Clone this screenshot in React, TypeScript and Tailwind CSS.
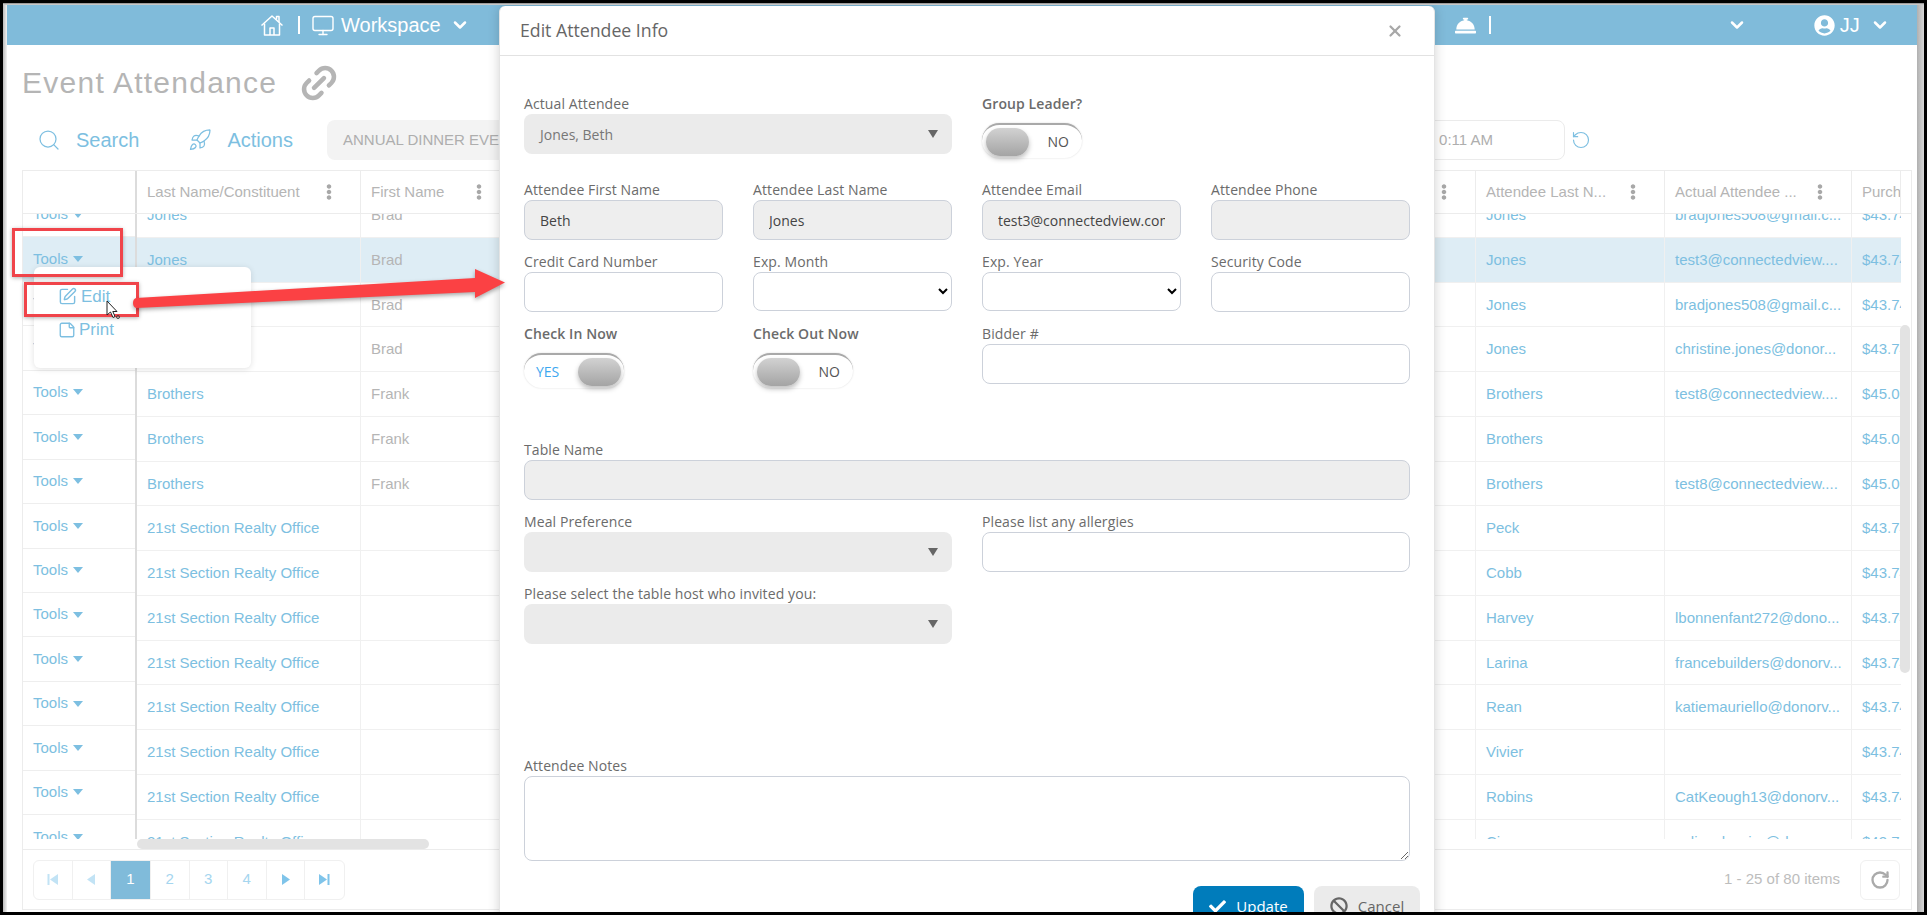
import { ChevronDown, Link2, Monitor, Rocket, RotateCcw, RotateCw, Search, SquarePen, StickyNote, X } from 'lucide-react'
import { FaBan, FaCheck, FaConciergeBell, FaEllipsisV, FaUserCircle } from 'react-icons/fa'

const rows = [
  { last: 'Jones', first: 'Brad', attendee: 'Jones', email: 'bradjones508@gmail.c...', price: '$43.74' },
  { last: 'Jones', first: 'Brad', attendee: 'Jones', email: 'test3@connectedview....', price: '$43.74', selected: true },
  { last: 'Jones', first: 'Brad', attendee: 'Jones', email: 'bradjones508@gmail.c...', price: '$43.74' },
  { last: 'Jones', first: 'Brad', attendee: 'Jones', email: 'christine.jones@donor...', price: '$43.74' },
  { last: 'Brothers', first: 'Frank', attendee: 'Brothers', email: 'test8@connectedview....', price: '$45.00' },
  { last: 'Brothers', first: 'Frank', attendee: 'Brothers', email: '', price: '$45.00' },
  { last: 'Brothers', first: 'Frank', attendee: 'Brothers', email: 'test8@connectedview....', price: '$45.00' },
  { last: '21st Section Realty Office', first: '', attendee: 'Peck', email: '', price: '$43.74' },
  { last: '21st Section Realty Office', first: '', attendee: 'Cobb', email: '', price: '$43.74' },
  { last: '21st Section Realty Office', first: '', attendee: 'Harvey', email: 'lbonnenfant272@dono...', price: '$43.74' },
  { last: '21st Section Realty Office', first: '', attendee: 'Larina', email: 'francebuilders@donorv...', price: '$43.74' },
  { last: '21st Section Realty Office', first: '', attendee: 'Rean', email: 'katiemauriello@donorv...', price: '$43.74' },
  { last: '21st Section Realty Office', first: '', attendee: 'Vivier', email: '', price: '$43.74' },
  { last: '21st Section Realty Office', first: '', attendee: 'Robins', email: 'CatKeough13@donorv...', price: '$43.74' },
  { last: '21st Section Realty Office', first: '', attendee: 'Cisneros', email: 'celinecharrier@donorv...', price: '$43.74' },
]

const columns = 'grid grid-cols-[224px_150px_815px_150px_189px_187px_49px]'
const cell = 'flex items-center overflow-hidden whitespace-nowrap border-r border-[#f0f0f0] pl-[10px] pt-px'

function HeaderCell({ title, menu = true }: { title?: string; menu?: boolean }) {
  return (
    <div className="flex items-center justify-between overflow-hidden whitespace-nowrap border-r border-[#ececec] pl-[10px] pr-[23px]">
      <span>{title}</span>
      {menu && <FaEllipsisV className="h-[16px] w-[16px] shrink-0 text-[#a8a8a8]" />}
    </div>
  )
}

function Label({ children, strong }: { children: string; strong?: boolean }) {
  return <div className={`flex h-[21px] items-center text-[14px] tracking-[0.1px] text-[#6b6b6b] ${strong ? 'font-semibold' : ''}`}>{children}</div>
}

function TextField({ label, value = '', disabled, className = '' }: { label: string; value?: string; disabled?: boolean; className?: string }) {
  return (
    <div className={className}>
      <Label>{label}</Label>
      <input
        readOnly
        value={value}
        className={`block h-[40px] w-full rounded-[8px] border border-[#ccd1da] px-[15px] text-[14px] text-[#444] outline-none ${disabled ? 'bg-[#eeeeee]' : 'bg-white'}`}
      />
    </div>
  )
}

function GreySelect({ label, value }: { label: string; value?: string }) {
  return (
    <div className="col-span-2">
      <Label>{label}</Label>
      <div className="flex h-[40px] items-center justify-between rounded-[8px] bg-[#ebebeb] pl-[16px] pr-[14px] text-[14px] text-[#777]">
        <span>{value}</span>
        <svg width="10" height="8" viewBox="0 0 10 8" className="fill-[#666]">
          <path d="M0 0h10L5 8z" />
        </svg>
      </div>
    </div>
  )
}

function NativeSelect({ label }: { label: string }) {
  return (
    <div>
      <Label>{label}</Label>
      <select className="block h-[39px] w-full rounded-[8px] border border-[#ccd1da] bg-white text-[14px] outline-none" />
    </div>
  )
}

function Toggle({ on }: { on?: boolean }) {
  return (
    <div className={`mt-[9px] flex h-[35px] w-[100px] items-center justify-between rounded-full border-t-2 border-[#a9a9a9] bg-white text-[14px] shadow-[0_0_2px_rgba(0,0,0,0.15)] ${on ? 'pl-[12px] pr-[3px]' : 'pl-[4px] pr-[13px]'}`}>
      {on && <span className="text-[#3ea8f0]">YES</span>}
      <span className="h-[28px] w-[43px] rounded-full bg-gradient-to-b from-[#d2d2d2] to-[#a4a4a4] shadow-[0_3px_5px_rgba(0,0,0,0.25)]" />
      {!on && <span className="text-[#555]">NO</span>}
    </div>
  )
}

function PageButton({ children, active, tone = 'text-[#a5d6ef]' }: { children: React.ReactNode; active?: boolean; tone?: string }) {
  return (
    <div className={`flex h-full items-center justify-center border-r border-[#f0f0f0] text-[15px] last:border-r-0 ${active ? 'w-[40px] bg-[#80bbda] text-white' : `w-[38.5px] ${tone}`}`}>
      {children}
    </div>
  )
}

function Triangle({ dir, bar }: { dir: 'left' | 'right'; bar?: boolean }) {
  return (
    <svg width="11" height="11" viewBox="0 0 11 11" className={dir === 'left' ? '-scale-x-100 fill-current' : 'fill-current'}>
      <path d={bar ? 'M0 0l8 5.5L0 11z' : 'M2 0l8 5.5L2 11z'} />
      {bar && <rect x="8.5" width="2" height="11" />}
    </svg>
  )
}

function HomeIcon() {
  return (
    <svg width="24" height="24" viewBox="0 0 24 24" fill="none" stroke="currentColor" strokeWidth="1.5" strokeLinejoin="round">
      <path d="M1.5 12.5L12 3l10.5 9.5" />
      <path d="M4.5 10.5V22h15V10.5" />
      <path d="M10 22v-7h4v7" />
      <path d="M16.5 6.5V3.5h2.5v5.5" />
    </svg>
  )
}

export default function App() {
  return (
    <div className="relative h-[915px] w-[1927px] overflow-hidden bg-black p-[3px] font-['Liberation_Sans',Arial,sans-serif]">
      <div className="flex h-full flex-col bg-white">
        <div className="h-[2px] shrink-0 bg-gradient-to-b from-[#888] to-[#ddd]" />
        <div className="flex min-h-0 flex-1">
          <div className="w-[4px] shrink-0 bg-gradient-to-r from-[#bbb] to-[#f2f2f2]" />

          <div className="relative w-[1910px] shrink-0 overflow-hidden bg-white">
            {/* top bar */}
            <div className="flex h-[40px] items-center bg-[#80bbda] pl-[253px] text-[20px] text-white">
              <HomeIcon />
              <span className="ml-[14px] h-[18px] w-[2px] bg-white" />
              <Monitor className="ml-[11px] h-[25px] w-[24px]" strokeWidth={1.4} />
              <span className="ml-[6px]">Workspace</span>
              <ChevronDown className="ml-[9px] h-[20px] w-[20px]" strokeWidth={3} />
              <FaConciergeBell className="ml-[985px] h-[21px] w-[21px]" />
              <span className="ml-[13px] h-[18px] w-[2px] bg-white" />
              <ChevronDown className="ml-[236px] h-[20px] w-[20px]" strokeWidth={3} />
              <FaUserCircle className="ml-[67px] h-[21px] w-[21px]" />
              <span className="ml-[5px]">JJ</span>
              <ChevronDown className="ml-[10px] h-[20px] w-[20px]" strokeWidth={3} />
            </div>

            {/* title */}
            <div className="flex h-[75px] items-center pl-[15px] text-[#b5b5b5]">
              <h1 className="text-[30px] tracking-[1.25px]">Event Attendance</h1>
              <Link2 className="ml-[21px] h-[42px] w-[42px] -rotate-45" strokeWidth={2.6} />
            </div>

            {/* toolbar */}
            <div className="flex h-[40px] items-center pl-[30px] text-[20px] text-[#7dbfe1]">
              <Search className="h-[24px] w-[24px]" strokeWidth={1.25} />
              <span className="ml-[15px]">Search</span>
              <Rocket className="ml-[49px] h-[24px] w-[24px]" strokeWidth={1.25} />
              <span className="ml-[15px]">Actions</span>
              <div className="ml-[34px] flex h-full w-[400px] items-center overflow-hidden rounded-[8px] bg-[#f3f3f3] pl-[16px] text-[15px] whitespace-nowrap text-[#aeaeae]">
                ANNUAL DINNER EVENT
              </div>
              <div className="ml-[438px] flex h-full w-[400px] items-center justify-end rounded-[8px] border border-[#ebebeb] pr-[71px] text-[15px] text-[#aeaeae]">
                0:11 AM
              </div>
              <RotateCcw className="ml-[6px] h-[20px] w-[20px]" strokeWidth={1.4} />
            </div>

            {/* grid */}
            <div className="relative mt-[10px] ml-[15px] h-[740px] w-[1890px] border border-[#ececec]">
              <div className="flex h-[43px] border-b border-[#ececec] text-[15px] text-[#b5b5b5]">
                <div className="w-[114px] shrink-0 border-r-2 border-[#dcdcdc]" />
                <div className={`${columns} flex-1`}>
                  <HeaderCell title="Last Name/Constituent" />
                  <HeaderCell title="First Name" />
                  <HeaderCell />
                  <HeaderCell />
                  <HeaderCell title="Attendee Last N..." />
                  <HeaderCell title="Actual Attendee ..." />
                  <HeaderCell title="Purchase" menu={false} />
                </div>
              </div>

              <div className="flex h-[625px] overflow-hidden text-[15px]">
                <div className="mt-[-21px] w-[114px] shrink-0 border-r-2 border-[#dcdcdc]">
                  {rows.map((row, i) => (
                    <div key={i} className={`flex h-[44.44px] items-center gap-[5px] border-b border-[#eeeeee] pl-[10px] text-[#7dbfe1] ${row.selected ? 'bg-[#deedf5]' : ''}`}>
                      Tools
                      <svg width="10" height="6" viewBox="0 0 10 6" className="fill-current">
                        <path d="M0 0h10L5 6z" />
                      </svg>
                    </div>
                  ))}
                </div>
                <div className="mt-[-21px] w-[1764px] shrink-0">
                  {rows.map((row, i) => (
                    <div key={i} className={`${columns} h-[44.75px] border-b border-[#f0f0f0] ${row.selected ? 'bg-[#deedf5]' : ''}`}>
                      <div className={`${cell} text-[#7dbfe1]`}>{row.last}</div>
                      <div className={`${cell} text-[#b5b5b5]`}>{row.first}</div>
                      <div className={cell} />
                      <div className={cell} />
                      <div className={`${cell} text-[#7dbfe1]`}>{row.attendee}</div>
                      <div className={`${cell} text-[#7dbfe1]`}>{row.email}</div>
                      <div className={`${cell} border-r-0 text-[#7dbfe1]`}>{row.price}</div>
                    </div>
                  ))}
                </div>
              </div>

              <div className="h-[10px] pl-[114px]">
                <div className="h-full w-[292px] rounded-full bg-[#e3e3e3]" />
              </div>

              <div className="flex h-[60px] items-center justify-between border-t border-[#ececec] pr-[11px] pl-[10px]">
                <div className="flex h-[40px] overflow-hidden rounded-[6px] border border-[#f0f0f0]">
                  <PageButton tone="text-[#c2e3f5]"><Triangle dir="left" bar /></PageButton>
                  <PageButton tone="text-[#c2e3f5]"><Triangle dir="left" /></PageButton>
                  <PageButton active>1</PageButton>
                  <PageButton>2</PageButton>
                  <PageButton>3</PageButton>
                  <PageButton>4</PageButton>
                  <PageButton tone="text-[#7fc4ea]"><Triangle dir="right" /></PageButton>
                  <PageButton tone="text-[#7fc4ea]"><Triangle dir="right" bar /></PageButton>
                </div>
                <div className="flex items-center gap-[20px] text-[15px] text-[#bdbdbd]">
                  <span>1 - 25 of 80 items</span>
                  <div className="flex h-[40px] w-[40px] items-center justify-center rounded-[6px] border border-[#f0f0f0] text-[#aaa]">
                    <RotateCw className="h-[20px] w-[20px]" strokeWidth={2.8} />
                  </div>
                </div>
              </div>

              <div className="absolute top-[154px] left-[1877px] h-[348px] w-[10px] rounded-full bg-[#e3e3e3]" />
            </div>

            {/* tools menu */}
            <div className="absolute top-[262px] left-[27px] h-[101px] w-[217px] rounded-[6px] bg-white pt-[13px] pl-[24px] text-[17px] text-[#7dbfe1] shadow-[0_1px_6px_rgba(0,0,0,0.12)]">
              <div className="flex h-[33px] items-center gap-[4px]">
                <SquarePen className="h-[19px] w-[19px]" strokeWidth={1.8} />
                Edit
              </div>
              <div className="flex h-[33px] items-center gap-[3px]">
                <StickyNote className="h-[18px] w-[18px]" strokeWidth={1.8} />
                Print
              </div>
            </div>

            {/* modal */}
            <div className="absolute top-[1px] left-[492px] h-[960px] w-[936px] rounded-t-[6px] border-x border-[#e4e4e4] bg-white font-['Open_Sans',sans-serif] shadow-[0_0_12px_rgba(0,0,0,0.18)]">
              <div className="flex h-[50px] items-center justify-between border-b border-[#e2e2e2] pr-[30px] pl-[20px]">
                <h2 className="text-[17.7px] text-[#666]">Edit Attendee Info</h2>
                <X className="h-[18px] w-[18px] text-[#a8a8a8]" strokeWidth={3} />
              </div>

              <div className="px-[24px] pt-[37px]">
                <div className="grid grid-cols-4 gap-x-[30px]">
                  <GreySelect label="Actual Attendee" value="Jones, Beth" />
                  <div className="col-span-2">
                    <Label strong>Group Leader?</Label>
                    <Toggle />
                  </div>
                </div>

                <div className="mt-[21px] grid grid-cols-4 gap-x-[30px]">
                  <TextField label="Attendee First Name" value="Beth" disabled />
                  <TextField label="Attendee Last Name" value="Jones" disabled />
                  <TextField label="Attendee Email" value="test3@connectedview.com" disabled />
                  <TextField label="Attendee Phone" disabled />
                </div>

                <div className="mt-[11px] grid grid-cols-4 gap-x-[30px]">
                  <TextField label="Credit Card Number" />
                  <NativeSelect label="Exp. Month" />
                  <NativeSelect label="Exp. Year" />
                  <TextField label="Security Code" />
                </div>

                <div className="mt-[11px] grid grid-cols-4 gap-x-[30px]">
                  <div>
                    <Label strong>Check In Now</Label>
                    <Toggle on />
                  </div>
                  <div>
                    <Label strong>Check Out Now</Label>
                    <Toggle />
                  </div>
                  <TextField label="Bidder #" className="col-span-2" />
                </div>

                <TextField label="Table Name" disabled className="mt-[51px]" />

                <div className="mt-[11px] grid grid-cols-4 gap-x-[30px]">
                  <GreySelect label="Meal Preference" />
                  <TextField label="Please list any allergies" className="col-span-2" />
                </div>

                <div className="mt-[11px] grid grid-cols-4 gap-x-[30px]">
                  <GreySelect label="Please select the table host who invited you:" />
                </div>

                <div className="mt-[111px]">
                  <Label>Attendee Notes</Label>
                  <textarea readOnly className="block h-[85px] w-full rounded-[8px] border border-[#ccd1da] bg-white outline-none" />
                </div>

                <div className="mt-[25px] mr-[-10px] flex justify-end gap-[10px] text-[15px]">
                  <div className="flex h-[40px] w-[111px] items-center justify-center gap-[10px] rounded-[8px] bg-[#007cbb] text-white">
                    <FaCheck className="h-[17px] w-[17px]" />
                    Update
                  </div>
                  <div className="flex h-[40px] w-[106px] items-center justify-center gap-[10px] rounded-[8px] bg-[#ebebeb] text-[#666]">
                    <FaBan className="h-[18px] w-[18px]" />
                    Cancel
                  </div>
                </div>
              </div>
            </div>
          </div>

          <div className="w-[7px] shrink-0 bg-gradient-to-r from-[#b0b0b0] to-[#d8d8d8]" />
        </div>
      </div>

      {/* screenshot callouts */}
      <div className="absolute top-[228px] left-[12px] h-[49px] w-[111px] border-[3px] border-[#f0444a] shadow-[0_1px_4px_rgba(0,0,0,0.3)]" />
      <div className="absolute top-[282px] left-[24px] h-[35px] w-[115px] border-[3px] border-[#f0444a] shadow-[0_1px_4px_rgba(0,0,0,0.3)]" />
      <svg className="absolute top-0 left-0 drop-shadow-[0_2px_2px_rgba(0,0,0,0.35)]" width="520" height="330" viewBox="0 0 520 330">
        <path d="M136 298L475 278V269L505 282.5L475 298V292L136 308C132 307 132 299 136 298Z" fill="#fb4144" />
      </svg>
      <svg className="absolute top-[300px] left-[106px]" width="16" height="20" viewBox="0 0 16 20">
        <path d="M1 1V15L4.5 12L7 17.5L9 16.5L6.8 11.5H11Z" fill="#fff" stroke="#222" strokeWidth="1" />
        <circle cx="12" cy="17" r="1.5" fill="none" stroke="#444" strokeWidth="1" />
      </svg>
    </div>
  )
}
